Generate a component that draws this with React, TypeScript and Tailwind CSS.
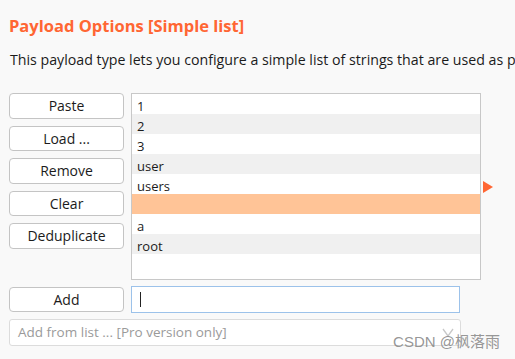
const items = ["1", "2", "3", "user", "users", "", "a", "root"];

const buttons = ["Paste", "Load ...", "Remove", "Clear", "Deduplicate"];

function Btn({ label }: { label: string }) {
  return (
    <button className="h-[25.5px] w-[115px] rounded-[4px] border border-[#c4c4c4] bg-white pt-[1px] text-[14px] leading-none text-[#1b1b1b]">
      {label}
    </button>
  );
}

export default function App() {
  return (
    <div
      className="relative h-[359px] w-[515px] overflow-hidden bg-[#f9f9f9] pl-[9px] text-[#1b1b1b]"
      style={{ fontFamily: '"Open Sans", "Noto Sans", sans-serif' }}
    >
      <h1 className="pt-[13px] text-[16.5px] font-bold leading-[26px] text-[#ff6633]">
        Payload Options [Simple list]
      </h1>
      <p className="mt-[11px] whitespace-nowrap pl-[1px] text-[14.2px] leading-[20px]">
        This payload type lets you configure a simple list of strings that are used as payloads.
      </p>

      <div className="mt-[23px] flex items-start">
        <div className="flex flex-col gap-[7px]">
          {buttons.map((b) => (
            <Btn key={b} label={b} />
          ))}
        </div>
        <div className="ml-[7px] h-[187px] w-[350px] border border-[#c8c8c8] bg-white">
          {items.map((it, i) => (
            <div
              key={i}
              className={`h-[20px] pl-[5px] pt-[2px] text-[13px] leading-[20px] ${
                i === 5 ? "bg-[#ffc497]" : i % 2 === 1 ? "bg-[#f0f0f0]" : "bg-white"
              }`}
            >
              {it}
            </div>
          ))}
        </div>
        <svg width="11" height="12" viewBox="0 0 11 12" className="ml-[2px] mt-[88px]">
          <polygon points="0,0 10,6 0,12" fill="#ff6633" />
        </svg>
      </div>

      <div className="mt-[6px] flex items-center">
        <Btn label="Add" />
        <div className="ml-[7px] flex h-[27px] w-[329px] items-center border border-[#9cc2ea] bg-white pl-[8px]">
          <span className="h-[15px] w-[1px] bg-[#222]" />
        </div>
      </div>

      <div className="relative mt-[6px] flex h-[27px] w-[452px] items-center rounded-[3px] border border-[#dcdcdc] bg-white pl-[8px] text-[13.5px] text-[#9a9a9a]">
        Add from list ... [Pro version only]
        <svg width="12" height="9" viewBox="0 0 12 9" className="absolute right-[6px] top-[8px]">
          <polyline points="1,1 6,8 11,1" fill="none" stroke="#c8c8c8" strokeWidth="1.3" />
        </svg>
      </div>

      <div
        className="absolute bottom-[10px] right-[15px] text-[15px] leading-none text-[#8a8a8a]/90"
        style={{ fontFamily: '"Liberation Sans", "Noto Sans CJK SC", sans-serif' }}
      >
        CSDN @枫落雨
      </div>
    </div>
  );
}
